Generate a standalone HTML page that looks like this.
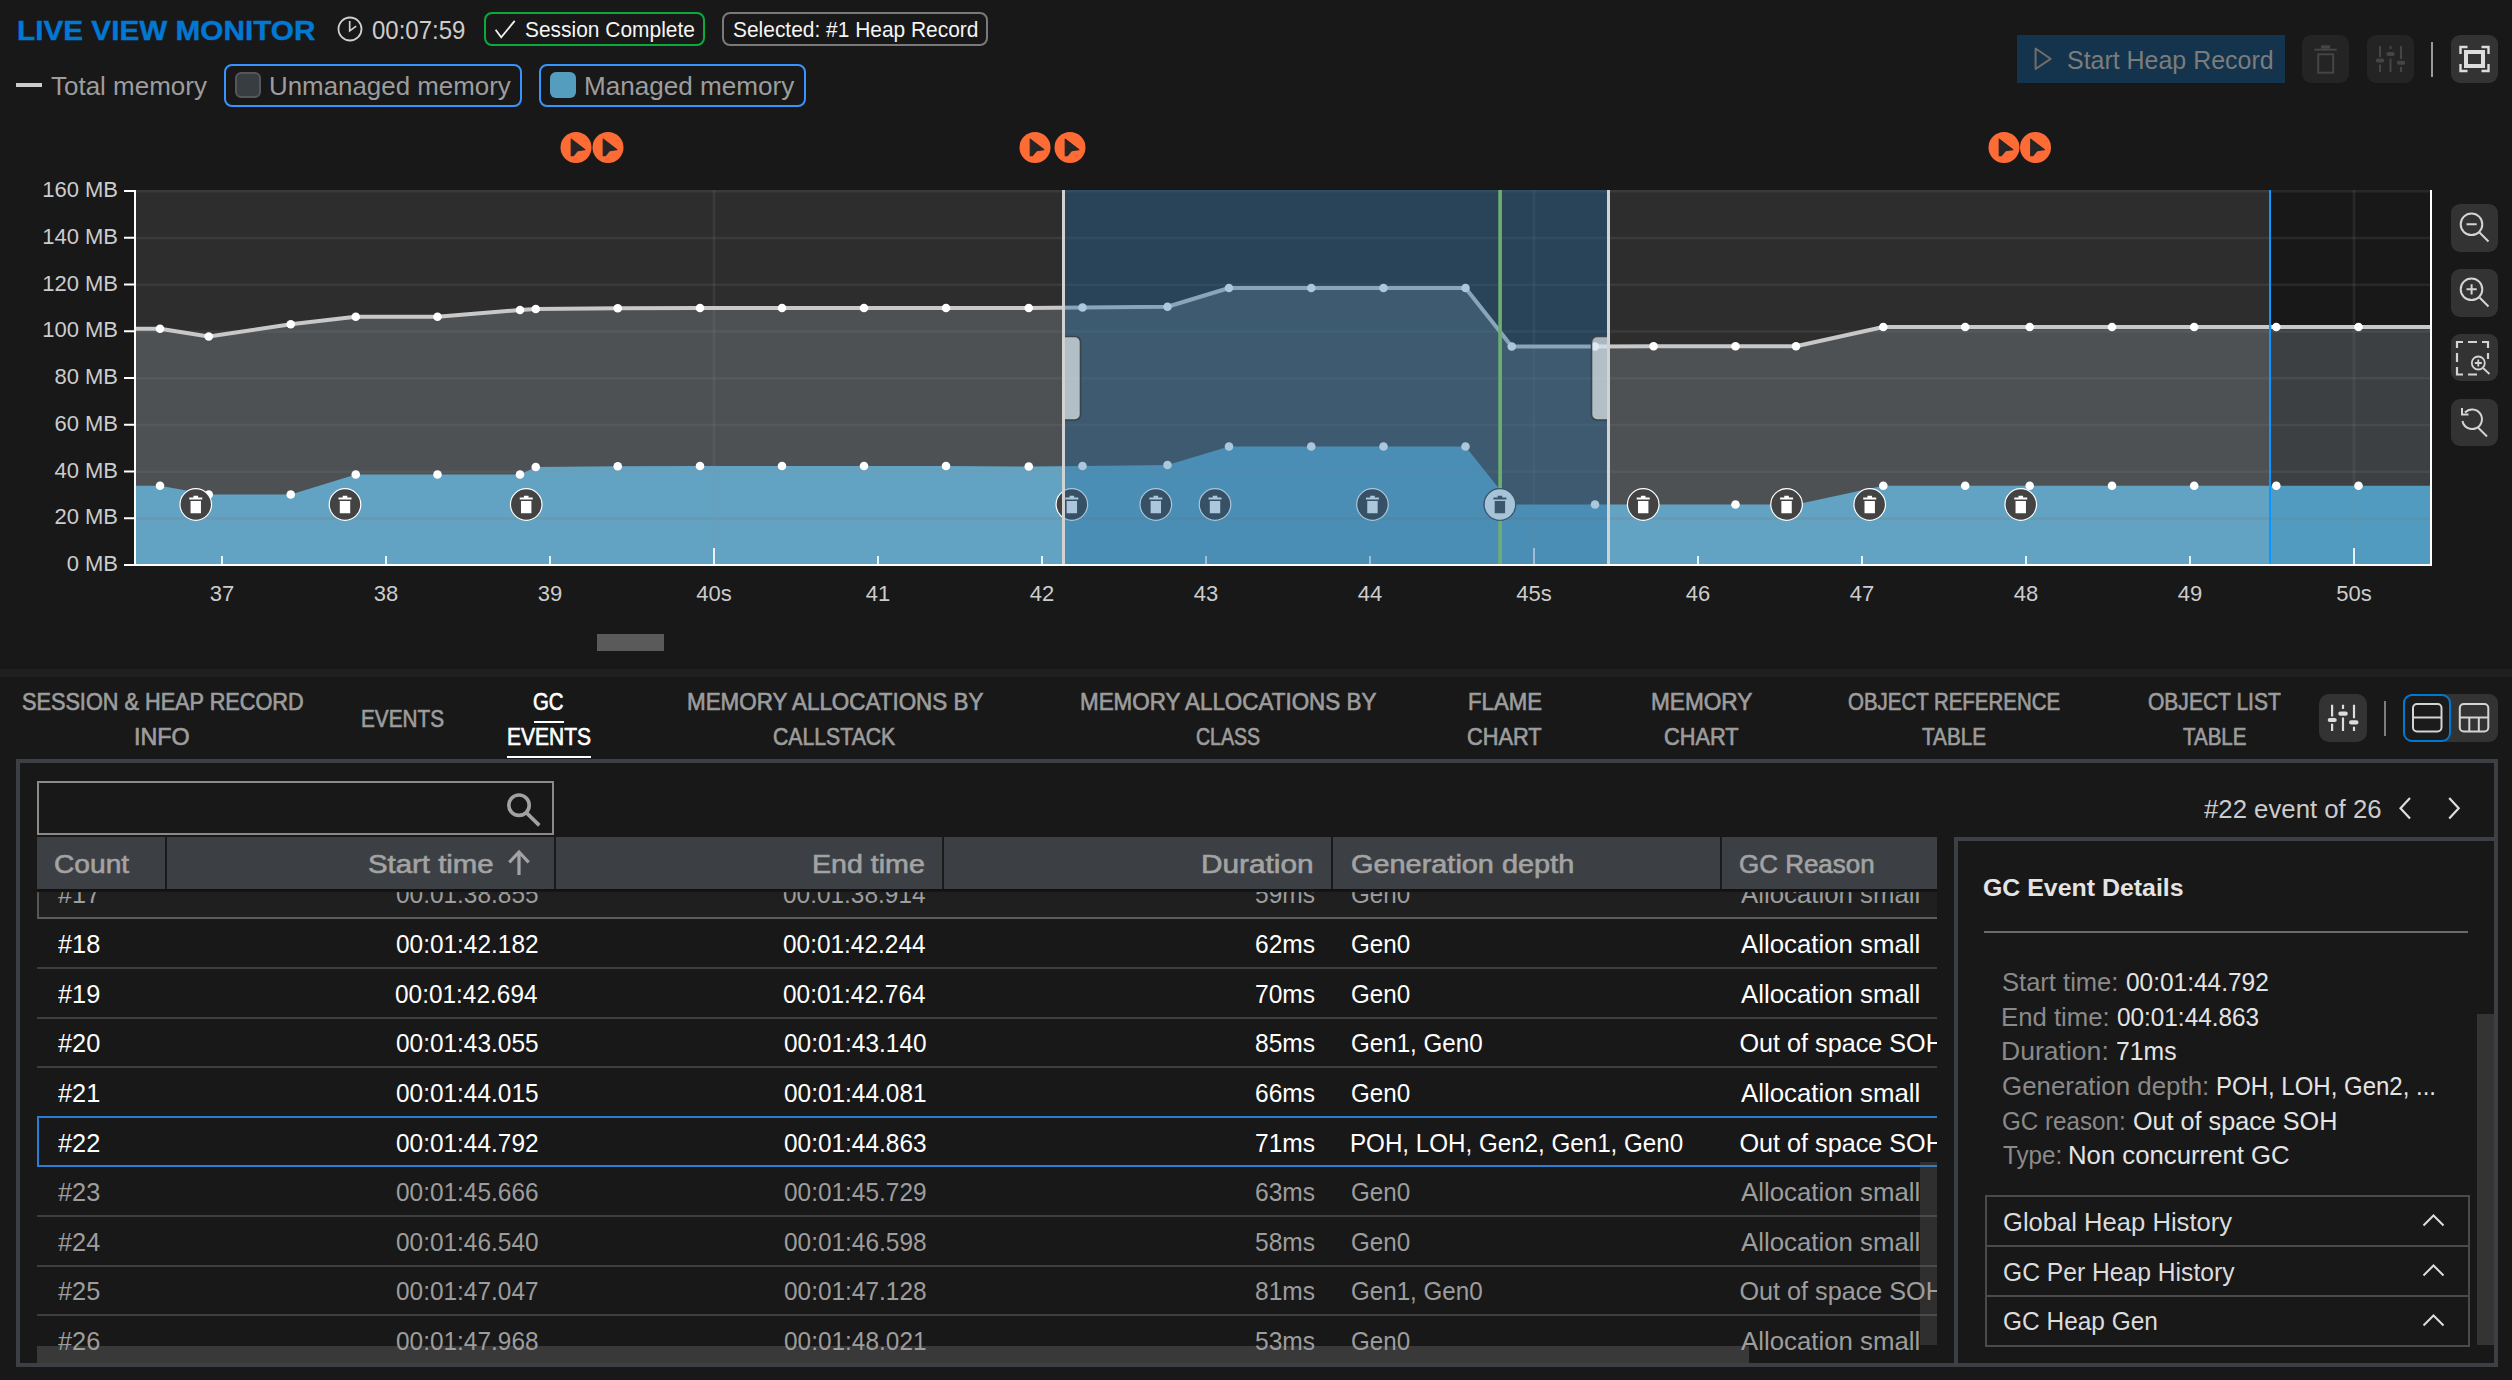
<!DOCTYPE html>
<html lang="en"><head><meta charset="utf-8"><title>Live View Monitor</title>
<style>
html,body{margin:0;padding:0;background:#181818;}
body{width:2512px;height:1380px;position:relative;overflow:hidden;font-family:"Liberation Sans",sans-serif;}
div,span,svg{position:absolute;box-sizing:border-box;}
.t{white-space:pre;line-height:1;transform-origin:0 0;}
.clip{overflow:hidden;}
</style></head><body>
<div id="header" style="left:0;top:0;width:2512px;height:120px">
<svg style="left:336px;top:15px" width="28" height="28" viewBox="0 0 28 28"><circle cx="14" cy="14" r="11.500" fill="none" stroke="#d0d0d0" stroke-width="1.800"/><path d="M13.700 6V15.900L20.200 11.100" fill="none" stroke="#d0d0d0" stroke-width="1.700"/></svg>
<div style="left:484px;top:12px;width:221px;height:34px;border:2px solid #0aab3c;border-radius:8px"></div>
<svg style="left:493px;top:18px" width="24" height="22" viewBox="0 0 24 22"><path d="M2.600 11.700L8.200 19.200L21.700 2.900" fill="none" stroke="#f0f0f0" stroke-width="1.8"/></svg>
<div style="left:722px;top:12px;width:266px;height:34px;border:2px solid #7a7a7a;border-radius:8px"></div>
<div style="left:16px;top:82.6px;width:26px;height:4.2px;background:#ccc"></div>
<div style="left:224.25px;top:64px;width:297.75px;height:42.9px;border:2px solid #3794ff;border-radius:8px"></div>
<div style="left:235px;top:72px;width:26.25px;height:26px;background:#373d41;border:2px solid #565656;border-radius:6px"></div>
<div style="left:539.25px;top:64px;width:267px;height:42.9px;border:2px solid #3794ff;border-radius:8px"></div>
<div style="left:550px;top:72px;width:26.25px;height:26px;background:#559dbe;border-radius:6px"></div>
<div style="left:2017px;top:35px;width:268px;height:48px;background:#13344c"></div>
<svg style="left:2030px;top:44px" width="26" height="30" viewBox="0 0 26 30"><path d="M5.6 4.5V25L20.6 14.8Z" fill="none" stroke="#736d68" stroke-width="2" stroke-linejoin="round"/></svg>
<div style="left:2302px;top:35px;width:47px;height:48px;background:#242424;border-radius:9px"></div>
<svg style="left:2302px;top:35px" width="47" height="48" viewBox="0 0 47 48"><g fill="none" stroke="#454545" stroke-width="2"><path d="M12.300 14.700H34.700"/><rect x="19" y="10.300" width="9" height="3.400" fill="#454545" stroke="none"/><rect x="16.200" y="19.300" width="15" height="18.400"/></g></svg>
<div style="left:2367px;top:35px;width:47px;height:48px;background:#242424;border-radius:9px"></div>
<svg style="left:2367px;top:35px" width="47" height="48" viewBox="0 0 47 48"><g fill="none" stroke="#454545" stroke-width="2"><path d="M13 11V22M13 29.500V37M23.500 11V14M23.500 23.500V37M34 11V24M34 32V37"/><path d="M10.800 25.500H15.200M21.300 19H25.700M31.800 27.800H36.200" stroke-width="4" stroke-linecap="round"/></g></svg>
<div style="left:2431px;top:42px;width:2px;height:35px;background:#9a9a9a"></div>
<div style="left:2451px;top:35px;width:47px;height:48px;background:#333;border-radius:9px"></div>
<svg style="left:2451px;top:35px" width="47" height="48" viewBox="0 0 47 48"><g fill="none" stroke="#ddd" stroke-width="2.4"><rect x="15" y="17" width="17" height="14" stroke-width="4"/><path d="M9.5 19V12H16.5M30.500 12H37.5V19M37.5 29V36H30.500M16.5 36H9.5V29"/></g></svg>
<span class="t" style="left:16.67px;top:17.00px;font-size:27.9px;color:#0078d4;transform:scaleX(1.0657);font-weight:700;-webkit-text-stroke:0.4px #0078d4;">LIVE VIEW MONITOR</span>
<span class="t" style="left:372.03px;top:18.00px;font-size:25.3px;color:#ccc;transform:scaleX(0.9490);">00:07:59</span>
<span class="t" style="left:525.03px;top:19.00px;font-size:22.3px;color:#f5f5f5;transform:scaleX(0.9389);">Session Complete</span>
<span class="t" style="left:732.53px;top:19.00px;font-size:22.3px;color:#f5f5f5;transform:scaleX(0.9385);">Selected: #1 Heap Record</span>
<span class="t" style="left:50.52px;top:74.00px;font-size:25.2px;color:#9d9d9d;transform:scaleX(1.0316);">Total memory</span>
<span class="t" style="left:268.96px;top:74.00px;font-size:25.2px;color:#9d9d9d;transform:scaleX(1.0278);">Unmanaged memory</span>
<span class="t" style="left:584.20px;top:74.00px;font-size:25.2px;color:#9d9d9d;transform:scaleX(1.0359);">Managed memory</span>
<span class="t" style="left:2067.20px;top:48.00px;font-size:25.2px;color:#7c7c7c;transform:scaleX(0.9903);">Start Heap Record</span>
</div>
<div id="chart" style="left:0;top:120px;width:2512px;height:549px">
<svg style="left:0;top:0" width="2512" height="549" viewBox="0 120 2512 549" font-family="'Liberation Sans',sans-serif"><defs><clipPath id="cl"><rect x="136" y="190" width="2134" height="375"/></clipPath><clipPath id="cr"><rect x="2270" y="190" width="161" height="375"/></clipPath></defs><g clip-path="url(#cl)"><rect x="136" y="190" width="2295" height="375" fill="#2d2d2d"/><polygon points="136,328.75 160,328.75 208.75,336.5 290.75,324.25 355.75,316.75 437.5,316.75 520,310 535.75,309 617.75,308.25 700,308 782,308 864,308 946,308 1028.75,308 1082.5,307.5 1167.5,306.75 1229,288 1311.25,288 1383.5,288 1465.5,288 1511.75,346.5 1595,346.5 1653.6,346.2 1735.5,346.2 1796,346.2 1883.3,327 1965.2,327 2029.7,327 2112,327 2194.2,327 2276.3,327 2358.5,327 2431,327 2431,564.5 136,564.5" fill="#4d5154"/><polygon points="136,485.75 160,485.75 208.75,494.5 290.75,494.5 355.75,474.5 437.5,474.5 520,474.5 535.75,467 617.75,466.25 700,466 782,466 864,466 946,466 1028.75,466.5 1082.5,466 1167.5,465 1229,446.5 1311.25,446.5 1383.5,446.5 1465.5,446.5 1511.75,504.5 1595,504.5 1653.6,504.5 1735.5,504.5 1796,504.5 1883.3,485.75 1965.2,485.75 2029.7,485.75 2112,485.75 2194.2,485.75 2276.3,485.75 2358.5,485.75 2431,485.75 2431,564.5 136,564.5" fill="#62a3c3"/></g><g clip-path="url(#cr)"><rect x="136" y="190" width="2295" height="375" fill="#181818"/><polygon points="136,328.75 160,328.75 208.75,336.5 290.75,324.25 355.75,316.75 437.5,316.75 520,310 535.75,309 617.75,308.25 700,308 782,308 864,308 946,308 1028.75,308 1082.5,307.5 1167.5,306.75 1229,288 1311.25,288 1383.5,288 1465.5,288 1511.75,346.5 1595,346.5 1653.6,346.2 1735.5,346.2 1796,346.2 1883.3,327 1965.2,327 2029.7,327 2112,327 2194.2,327 2276.3,327 2358.5,327 2431,327 2431,564.5 136,564.5" fill="#3d4042"/><polygon points="136,485.75 160,485.75 208.75,494.5 290.75,494.5 355.75,474.5 437.5,474.5 520,474.5 535.75,467 617.75,466.25 700,466 782,466 864,466 946,466 1028.75,466.5 1082.5,466 1167.5,465 1229,446.5 1311.25,446.5 1383.5,446.5 1465.5,446.5 1511.75,504.5 1595,504.5 1653.6,504.5 1735.5,504.5 1796,504.5 1883.3,485.75 1965.2,485.75 2029.7,485.75 2112,485.75 2194.2,485.75 2276.3,485.75 2358.5,485.75 2431,485.75 2431,564.5 136,564.5" fill="#509bbf"/></g><g fill="rgba(140,140,140,0.14)"><rect x="136" y="517.25" width="2294" height="2.5" fill="rgba(128,128,128,0.3)"/><rect x="136" y="470.5" width="2294" height="2.5"/><rect x="136" y="423.75" width="2294" height="2.5"/><rect x="136" y="377" width="2294" height="2.5"/><rect x="136" y="330.25" width="2294" height="2.5"/><rect x="136" y="283.5" width="2294" height="2.5"/><rect x="136" y="236.75" width="2294" height="2.5"/><rect x="136" y="190" width="2294" height="2.5"/><rect x="712.7" y="190" width="2.600" height="374"/><rect x="1532.7" y="190" width="2.600" height="374"/><rect x="2352.7" y="190" width="2.600" height="374"/></g><g fill="rgba(255,255,255,0.85)"><rect x="221" y="556" width="2" height="8.5"/><rect x="385" y="556" width="2" height="8.5"/><rect x="549" y="556" width="2" height="8.5"/><rect x="713" y="548" width="2" height="16.5"/><rect x="877" y="556" width="2" height="8.5"/><rect x="1041" y="556" width="2" height="8.5"/><rect x="1205" y="556" width="2" height="8.5"/><rect x="1369" y="556" width="2" height="8.5"/><rect x="1533" y="548" width="2" height="16.5"/><rect x="1697" y="556" width="2" height="8.5"/><rect x="1861" y="556" width="2" height="8.5"/><rect x="2025" y="556" width="2" height="8.5"/><rect x="2189" y="556" width="2" height="8.5"/><rect x="2353" y="548" width="2" height="16.5"/></g><polyline points="136,328.75 160,328.75 208.75,336.5 290.75,324.25 355.75,316.75 437.5,316.75 520,310 535.75,309 617.75,308.25 700,308 782,308 864,308 946,308 1028.75,308 1082.5,307.5 1167.5,306.75 1229,288 1311.25,288 1383.5,288 1465.5,288 1511.75,346.5 1595,346.5 1653.6,346.2 1735.5,346.2 1796,346.2 1883.3,327 1965.2,327 2029.7,327 2112,327 2194.2,327 2276.3,327 2358.5,327 2431,327" fill="none" stroke="#c8c8c8" stroke-width="4" stroke-linejoin="round"/><g fill="#fff"><circle cx="160" cy="328.75" r="4.3"/><circle cx="208.75" cy="336.5" r="4.3"/><circle cx="290.75" cy="324.25" r="4.3"/><circle cx="355.75" cy="316.75" r="4.3"/><circle cx="437.5" cy="316.75" r="4.3"/><circle cx="520" cy="310" r="4.3"/><circle cx="535.75" cy="309" r="4.3"/><circle cx="617.75" cy="308.25" r="4.3"/><circle cx="700" cy="308" r="4.3"/><circle cx="782" cy="308" r="4.3"/><circle cx="864" cy="308" r="4.3"/><circle cx="946" cy="308" r="4.3"/><circle cx="1028.75" cy="308" r="4.3"/><circle cx="1082.5" cy="307.5" r="4.3"/><circle cx="1167.5" cy="306.75" r="4.3"/><circle cx="1229" cy="288" r="4.3"/><circle cx="1311.25" cy="288" r="4.3"/><circle cx="1383.5" cy="288" r="4.3"/><circle cx="1465.5" cy="288" r="4.3"/><circle cx="1511.75" cy="346.5" r="4.3"/><circle cx="1595" cy="346.5" r="4.3"/><circle cx="1653.6" cy="346.2" r="4.3"/><circle cx="1735.5" cy="346.2" r="4.3"/><circle cx="1796" cy="346.2" r="4.3"/><circle cx="1883.3" cy="327" r="4.3"/><circle cx="1965.2" cy="327" r="4.3"/><circle cx="2029.7" cy="327" r="4.3"/><circle cx="2112" cy="327" r="4.3"/><circle cx="2194.2" cy="327" r="4.3"/><circle cx="2276.3" cy="327" r="4.3"/><circle cx="2358.5" cy="327" r="4.3"/><circle cx="160" cy="485.75" r="4.3"/><circle cx="208.75" cy="494.5" r="4.3"/><circle cx="290.75" cy="494.5" r="4.3"/><circle cx="355.75" cy="474.5" r="4.3"/><circle cx="437.5" cy="474.5" r="4.3"/><circle cx="520" cy="474.5" r="4.3"/><circle cx="535.75" cy="467" r="4.3"/><circle cx="617.75" cy="466.25" r="4.3"/><circle cx="700" cy="466" r="4.3"/><circle cx="782" cy="466" r="4.3"/><circle cx="864" cy="466" r="4.3"/><circle cx="946" cy="466" r="4.3"/><circle cx="1028.75" cy="466.5" r="4.3"/><circle cx="1082.5" cy="466" r="4.3"/><circle cx="1167.5" cy="465" r="4.3"/><circle cx="1229" cy="446.5" r="4.3"/><circle cx="1311.25" cy="446.5" r="4.3"/><circle cx="1383.5" cy="446.5" r="4.3"/><circle cx="1465.5" cy="446.5" r="4.3"/><circle cx="1511.75" cy="504.5" r="4.3"/><circle cx="1595" cy="504.5" r="4.3"/><circle cx="1653.6" cy="504.5" r="4.3"/><circle cx="1735.5" cy="504.5" r="4.3"/><circle cx="1796" cy="504.5" r="4.3"/><circle cx="1883.3" cy="485.75" r="4.3"/><circle cx="1965.2" cy="485.75" r="4.3"/><circle cx="2029.7" cy="485.75" r="4.3"/><circle cx="2112" cy="485.75" r="4.3"/><circle cx="2194.2" cy="485.75" r="4.3"/><circle cx="2276.3" cy="485.75" r="4.3"/><circle cx="2358.5" cy="485.75" r="4.3"/></g><g transform="translate(195.76,504.5)"><circle r="15.8" fill="#434343" stroke="#fff" stroke-width="1.2"/><path d="M-6.5 -6.9H6.5V-4.9H-6.5ZM-2.3 -8.8H2.3V-6.9H-2.3ZM-5.2 -3.5H5.2V8.7H-5.2Z" fill="#fff"/></g><g transform="translate(345,504.5)"><circle r="15.8" fill="#434343" stroke="#fff" stroke-width="1.2"/><path d="M-6.5 -6.9H6.5V-4.9H-6.5ZM-2.3 -8.8H2.3V-6.9H-2.3ZM-5.2 -3.5H5.2V8.7H-5.2Z" fill="#fff"/></g><g transform="translate(526.22,504.5)"><circle r="15.8" fill="#434343" stroke="#fff" stroke-width="1.2"/><path d="M-6.5 -6.9H6.5V-4.9H-6.5ZM-2.3 -8.8H2.3V-6.9H-2.3ZM-5.2 -3.5H5.2V8.7H-5.2Z" fill="#fff"/></g><g transform="translate(1071.85,504.5)"><circle r="15.8" fill="#434343" stroke="#fff" stroke-width="1.2"/><path d="M-6.5 -6.9H6.5V-4.9H-6.5ZM-2.3 -8.8H2.3V-6.9H-2.3ZM-5.2 -3.5H5.2V8.7H-5.2Z" fill="#fff"/></g><g transform="translate(1155.82,504.5)"><circle r="15.8" fill="#434343" stroke="#fff" stroke-width="1.2"/><path d="M-6.5 -6.9H6.5V-4.9H-6.5ZM-2.3 -8.8H2.3V-6.9H-2.3ZM-5.2 -3.5H5.2V8.7H-5.2Z" fill="#fff"/></g><g transform="translate(1215.02,504.5)"><circle r="15.8" fill="#434343" stroke="#fff" stroke-width="1.2"/><path d="M-6.5 -6.9H6.5V-4.9H-6.5ZM-2.3 -8.8H2.3V-6.9H-2.3ZM-5.2 -3.5H5.2V8.7H-5.2Z" fill="#fff"/></g><g transform="translate(1372.46,504.5)"><circle r="15.8" fill="#434343" stroke="#fff" stroke-width="1.2"/><path d="M-6.5 -6.9H6.5V-4.9H-6.5ZM-2.3 -8.8H2.3V-6.9H-2.3ZM-5.2 -3.5H5.2V8.7H-5.2Z" fill="#fff"/></g><g transform="translate(1499.89,504.5)"><circle r="15.8" fill="#f6f8fa" stroke="#434343" stroke-width="1.2"/><path d="M-6.5 -6.9H6.5V-4.9H-6.5ZM-2.3 -8.8H2.3V-6.9H-2.3ZM-5.2 -3.5H5.2V8.7H-5.2Z" fill="#434343"/></g><g transform="translate(1643.22,504.5)"><circle r="15.8" fill="#434343" stroke="#fff" stroke-width="1.2"/><path d="M-6.5 -6.9H6.5V-4.9H-6.5ZM-2.3 -8.8H2.3V-6.9H-2.3ZM-5.2 -3.5H5.2V8.7H-5.2Z" fill="#fff"/></g><g transform="translate(1786.56,504.5)"><circle r="15.8" fill="#434343" stroke="#fff" stroke-width="1.2"/><path d="M-6.5 -6.9H6.5V-4.9H-6.5ZM-2.3 -8.8H2.3V-6.9H-2.3ZM-5.2 -3.5H5.2V8.7H-5.2Z" fill="#fff"/></g><g transform="translate(1869.71,504.5)"><circle r="15.8" fill="#434343" stroke="#fff" stroke-width="1.2"/><path d="M-6.5 -6.9H6.5V-4.9H-6.5ZM-2.3 -8.8H2.3V-6.9H-2.3ZM-5.2 -3.5H5.2V8.7H-5.2Z" fill="#fff"/></g><g transform="translate(2020.75,504.5)"><circle r="15.8" fill="#434343" stroke="#fff" stroke-width="1.2"/><path d="M-6.5 -6.9H6.5V-4.9H-6.5ZM-2.3 -8.8H2.3V-6.9H-2.3ZM-5.2 -3.5H5.2V8.7H-5.2Z" fill="#fff"/></g><rect x="1065" y="190" width="542" height="375" fill="rgba(34,106,160,0.375)"/><rect x="1498.3" y="190" width="3.6" height="375" fill="#6db06d"/><g transform="translate(1499.89,504.5)"><circle r="15.8" fill="#a7c3d8" stroke="#3a556c" stroke-width="1.2"/><path d="M-6.5 -6.9H6.5V-4.9H-6.5ZM-2.3 -8.8H2.3V-6.9H-2.3ZM-5.2 -3.5H5.2V8.7H-5.2Z" fill="#3a556c"/></g><path d="M1064 336.500H1075a5.500 5.500 0 0 1 5.500 5.500V414.500a5.500 5.500 0 0 1 -5.500 5.500H1064" fill="rgba(255,255,255,0.61)" stroke="#3a4349" stroke-width="1.600"/><path d="M1608 336.500H1597a5.500 5.500 0 0 0 -5.500 5.500V414.500a5.500 5.500 0 0 0 5.500 5.500H1608" fill="rgba(255,255,255,0.61)" stroke="#3a4349" stroke-width="1.600"/><rect x="1062" y="190" width="3" height="375" fill="#d2d2d2"/><rect x="1607" y="190" width="3" height="375" fill="#d2d2d2"/><rect x="2269" y="190" width="2" height="375" fill="#0a97ff"/><g fill="#fff"><rect x="134" y="190" width="2" height="376"/><rect x="124" y="564" width="2308" height="2"/><rect x="2430" y="190" width="2" height="376"/><rect x="124" y="517.25" width="10" height="2"/><rect x="124" y="470.5" width="10" height="2"/><rect x="124" y="423.75" width="10" height="2"/><rect x="124" y="377" width="10" height="2"/><rect x="124" y="330.25" width="10" height="2"/><rect x="124" y="283.5" width="10" height="2"/><rect x="124" y="236.75" width="10" height="2"/><rect x="124" y="190" width="10" height="2"/></g><g fill="#ccc" font-size="22"><text x="118" y="571" text-anchor="end">0 MB</text><text x="118" y="524.25" text-anchor="end">20 MB</text><text x="118" y="477.5" text-anchor="end">40 MB</text><text x="118" y="430.75" text-anchor="end">60 MB</text><text x="118" y="384" text-anchor="end">80 MB</text><text x="118" y="337.25" text-anchor="end">100 MB</text><text x="118" y="290.5" text-anchor="end">120 MB</text><text x="118" y="243.75" text-anchor="end">140 MB</text><text x="118" y="197" text-anchor="end">160 MB</text><text x="222" y="601" text-anchor="middle">37</text><text x="386" y="601" text-anchor="middle">38</text><text x="550" y="601" text-anchor="middle">39</text><text x="714" y="601" text-anchor="middle">40s</text><text x="878" y="601" text-anchor="middle">41</text><text x="1042" y="601" text-anchor="middle">42</text><text x="1206" y="601" text-anchor="middle">43</text><text x="1370" y="601" text-anchor="middle">44</text><text x="1534" y="601" text-anchor="middle">45s</text><text x="1698" y="601" text-anchor="middle">46</text><text x="1862" y="601" text-anchor="middle">47</text><text x="2026" y="601" text-anchor="middle">48</text><text x="2190" y="601" text-anchor="middle">49</text><text x="2354" y="601" text-anchor="middle">50s</text></g><g transform="translate(576,147.500)"><circle r="15.500" fill="#ff6b35"/><path d="M-4.800 -8.400L8.900 2.100L1.600 3.100L-2.600 8.200H-4.800Z" fill="#252526" stroke="#252526" stroke-width="1.100" stroke-linejoin="round"/></g><g transform="translate(608,147.500)"><circle r="15.500" fill="#ff6b35"/><path d="M-4.800 -8.400L8.900 2.100L1.600 3.100L-2.600 8.200H-4.800Z" fill="#252526" stroke="#252526" stroke-width="1.100" stroke-linejoin="round"/></g><g transform="translate(1035,147.500)"><circle r="15.500" fill="#ff6b35"/><path d="M-4.800 -8.400L8.900 2.100L1.600 3.100L-2.600 8.200H-4.800Z" fill="#252526" stroke="#252526" stroke-width="1.100" stroke-linejoin="round"/></g><g transform="translate(1070,147.500)"><circle r="15.500" fill="#ff6b35"/><path d="M-4.800 -8.400L8.900 2.100L1.600 3.100L-2.600 8.200H-4.800Z" fill="#252526" stroke="#252526" stroke-width="1.100" stroke-linejoin="round"/></g><g transform="translate(2004,147.500)"><circle r="15.500" fill="#ff6b35"/><path d="M-4.800 -8.400L8.900 2.100L1.600 3.100L-2.600 8.200H-4.800Z" fill="#252526" stroke="#252526" stroke-width="1.100" stroke-linejoin="round"/></g><g transform="translate(2035.5,147.500)"><circle r="15.500" fill="#ff6b35"/><path d="M-4.800 -8.400L8.900 2.100L1.600 3.100L-2.600 8.200H-4.800Z" fill="#252526" stroke="#252526" stroke-width="1.100" stroke-linejoin="round"/></g><rect x="597" y="634" width="67" height="17" fill="#5a5a5a"/></svg>
<svg style="left:2451px;top:84px;background:#333;border-radius:9px" width="47" height="47.500" viewBox="0 0 47 47.500"><g fill="none" stroke="#d4d4d4" stroke-width="2"><circle cx="20.500" cy="20.300" r="10.800"/><path d="M28.500 28.500L37.500 37.500M15.500 20.300H25.700"/></g></svg>
<svg style="left:2451px;top:149px;background:#333;border-radius:9px" width="47" height="47.500" viewBox="0 0 47 47.500"><g fill="none" stroke="#d4d4d4" stroke-width="2"><circle cx="20.500" cy="20.300" r="10.800"/><path d="M28.500 28.500L37.500 37.500M15.500 20.300H25.700M20.600 15.200V25.400"/></g></svg>
<svg style="left:2451px;top:213.5px;background:#333;border-radius:9px" width="47" height="47.500" viewBox="0 0 47 47.500"><g fill="none" stroke="#d4d4d4" stroke-width="2"><path d="M6 14V8H12M17 8H26M31 8H37V14M37 19V25M6 19V28M6 33V40.500H12M17 40.500H26" stroke-width="2.200"/><circle cx="27.300" cy="29" r="6.500" stroke-width="1.800"/><path d="M32 34L38.500 40M23.800 29H30.800M27.300 25.500V32.500" stroke-width="1.800"/></g></svg>
<svg style="left:2451px;top:278.5px;background:#333;border-radius:9px" width="47" height="47.500" viewBox="0 0 47 47.500"><g fill="none" stroke="#d4d4d4" stroke-width="2"><path d="M11.500 22A9.800 9.800 0 1 0 14 13.500M11 9V15.500H17.500"/><path d="M27 28.500L36 37.500"/></g></svg>
</div>
<div id="splitter" style="left:0;top:669px;width:2512px;height:8px;background:#1f1f1f"></div>
<div id="tabs" style="left:0;top:677px;width:2512px;height:82px">
<div style="left:533.5px;top:43.5px;width:30.5px;height:2px;background:#fff"></div>
<div style="left:507px;top:78.5px;width:84px;height:2.5px;background:#fff"></div>
<svg style="left:2319px;top:17px;background:#333;border-radius:10px" width="48" height="47.500" viewBox="0 0 48 47.500"><g fill="none" stroke="#dcdcdc" stroke-width="2.200"><path d="M13.100 10.800V22.500M13.100 29.700V37M24 10.800V15M24 23.400V37M35 10.800V24.300M35 32.700V37"/><path d="M10.800 26H15.700M21.400 19.700H26.700M32.100 28.400H37.400" stroke-width="4.200" stroke-linecap="round"/></g></svg>
<div style="left:2384px;top:24px;width:2px;height:35px;background:#7d7d7d"></div>
<div style="left:2402.5px;top:17px;width:95px;height:47.5px;background:#333;border-radius:9px"></div>
<div style="left:2402.5px;top:17px;width:48.5px;height:47.5px;border:2px solid #0078d4;border-radius:9px;background:#1b1b1b"></div>
<svg style="left:2402.500px;top:17px" width="95" height="47.500" viewBox="0 0 95 47.500"><g fill="none" stroke="#d4d4d4" stroke-width="2"><rect x="10" y="10" width="28.500" height="27.500" rx="4"/><path d="M10 23.500H38.500"/><rect x="56.800" y="10" width="28.500" height="27.500" rx="4"/><path d="M56.800 23.500H85.300M66.300 23.500V37.500M75.800 23.500V37.500"/></g></svg>
<span class="t" style="left:21.54px;top:14.00px;font-size:23.4px;color:#9d9d9d;transform:scaleX(0.9274);-webkit-text-stroke:0.65px #9d9d9d;">SESSION &amp; HEAP RECORD</span>
<span class="t" style="left:134.21px;top:49.00px;font-size:23.4px;color:#9d9d9d;transform:scaleX(0.9963);-webkit-text-stroke:0.65px #9d9d9d;">INFO</span>
<span class="t" style="left:361.06px;top:31.00px;font-size:23.4px;color:#9d9d9d;transform:scaleX(0.8871);-webkit-text-stroke:0.65px #9d9d9d;">EVENTS</span>
<span class="t" style="left:533.06px;top:14.00px;font-size:23.4px;color:#fff;transform:scaleX(0.8714);-webkit-text-stroke:0.65px #fff;">GC</span>
<span class="t" style="left:506.55px;top:49.00px;font-size:23.4px;color:#fff;transform:scaleX(0.8978);-webkit-text-stroke:0.65px #fff;">EVENTS</span>
<span class="t" style="left:686.52px;top:14.00px;font-size:23.4px;color:#9d9d9d;transform:scaleX(0.9579);-webkit-text-stroke:0.65px #9d9d9d;">MEMORY ALLOCATIONS BY</span>
<span class="t" style="left:773.05px;top:49.00px;font-size:23.4px;color:#9d9d9d;transform:scaleX(0.9074);-webkit-text-stroke:0.65px #9d9d9d;">CALLSTACK</span>
<span class="t" style="left:1079.52px;top:14.00px;font-size:23.4px;color:#9d9d9d;transform:scaleX(0.9579);-webkit-text-stroke:0.65px #9d9d9d;">MEMORY ALLOCATIONS BY</span>
<span class="t" style="left:1195.58px;top:49.00px;font-size:23.4px;color:#9d9d9d;transform:scaleX(0.8355);-webkit-text-stroke:0.65px #9d9d9d;">CLASS</span>
<span class="t" style="left:1467.53px;top:14.00px;font-size:23.4px;color:#9d9d9d;transform:scaleX(0.9487);-webkit-text-stroke:0.65px #9d9d9d;">FLAME</span>
<span class="t" style="left:1467.03px;top:49.00px;font-size:23.4px;color:#9d9d9d;transform:scaleX(0.9313);-webkit-text-stroke:0.65px #9d9d9d;">CHART</span>
<span class="t" style="left:1651.02px;top:14.00px;font-size:23.4px;color:#9d9d9d;transform:scaleX(0.9667);-webkit-text-stroke:0.65px #9d9d9d;">MEMORY</span>
<span class="t" style="left:1664.03px;top:49.00px;font-size:23.4px;color:#9d9d9d;transform:scaleX(0.9313);-webkit-text-stroke:0.65px #9d9d9d;">CHART</span>
<span class="t" style="left:1847.56px;top:14.00px;font-size:23.4px;color:#9d9d9d;transform:scaleX(0.8740);-webkit-text-stroke:0.65px #9d9d9d;">OBJECT REFERENCE</span>
<span class="t" style="left:1921.94px;top:49.00px;font-size:23.4px;color:#9d9d9d;transform:scaleX(0.8836);-webkit-text-stroke:0.65px #9d9d9d;">TABLE</span>
<span class="t" style="left:2147.55px;top:14.00px;font-size:23.4px;color:#9d9d9d;transform:scaleX(0.8986);-webkit-text-stroke:0.65px #9d9d9d;">OBJECT LIST</span>
<span class="t" style="left:2182.94px;top:49.00px;font-size:23.4px;color:#9d9d9d;transform:scaleX(0.8767);-webkit-text-stroke:0.65px #9d9d9d;">TABLE</span>
</div>
<div id="panel" style="left:16px;top:759px;width:2482px;height:608px;border:4px solid #3c4045">
<div style="left:17px;top:18px;width:517.25px;height:54px;border:2px solid #8a8a8a"></div>
<svg style="left:480px;top:27px" width="48" height="44" viewBox="500 790 48 44"><g fill="none" stroke="#a2a2a2" stroke-width="3.600"><circle cx="519" cy="805.200" r="10.200"/><path d="M526.300 812.600L539.300 825.400"/></g></svg>
<svg style="left:2370px;top:27px" width="80" height="36" viewBox="2390 790 80 36"><g fill="none" stroke="#ddd" stroke-width="2.200"><path d="M2410 798L2400.500 808.200L2410 818.400M2449.200 798L2458.700 808.200L2449.200 818.400"/></g></svg>
<div id="table" class="clip" style="left:17px;top:74px;width:1900px;height:526px"><div id="rows" class="clip" style="left:0;top:55px;width:1900px;height:471px"><div style="left:0px;top:-22.3px;width:1900px;height:49.6px;background:#1f1f1f;border-left:2px solid #565656;border-bottom:2px solid #5c5c5c"></div>
<div style="left:0px;top:74.9px;width:1900px;height:2px;background:#3e3e3e"></div>
<div style="left:0px;top:124.5px;width:1900px;height:2px;background:#3e3e3e"></div>
<div style="left:0px;top:174.1px;width:1900px;height:2px;background:#3e3e3e"></div>
<div style="left:0px;top:223.7px;width:1902px;height:51.6px;border:2px solid #2b7cd3;border-right:none"></div>
<div style="left:0px;top:322.9px;width:1900px;height:2px;background:#3e3e3e"></div>
<div style="left:0px;top:372.5px;width:1900px;height:2px;background:#3e3e3e"></div>
<div style="left:0px;top:422.1px;width:1900px;height:2px;background:#3e3e3e"></div>
<div style="left:1883.3px;top:270.3px;width:16.7px;height:183.2px;background:rgba(110,110,110,0.27)"></div>
<div style="left:0px;top:454px;width:1711.5px;height:17px;background:#393939"></div>
<div style="left:1711.5px;top:454px;width:188.5px;height:17px;background:#181818"></div>
<span class="t" style="left:20.50px;top:-10.00px;font-size:25.2px;color:#9d9d9d;transform:scaleX(1.0060);">#17</span>
<span class="t" style="left:358.62px;top:-10.00px;font-size:25.2px;color:#9d9d9d;transform:scaleX(0.9692);">00:01:38.855</span>
<span class="t" style="left:746.30px;top:-10.00px;font-size:25.2px;color:#9d9d9d;transform:scaleX(0.9692);">00:01:38.914</span>
<span class="t" style="left:1218.01px;top:-10.00px;font-size:25.2px;color:#9d9d9d;transform:scaleX(0.9754);">59ms</span>
<span class="t" style="left:1313.77px;top:-10.00px;font-size:25.2px;color:#9d9d9d;transform:scaleX(0.9595);">Gen0</span>
<span class="t" style="left:1703.51px;top:-10.00px;font-size:25.2px;color:#9d9d9d;transform:scaleX(1.0243);">Allocation small</span>
<span class="t" style="left:20.50px;top:40.00px;font-size:25.2px;color:#fff;transform:scaleX(1.0060);">#18</span>
<span class="t" style="left:358.62px;top:40.00px;font-size:25.2px;color:#fff;transform:scaleX(0.9692);">00:01:42.182</span>
<span class="t" style="left:746.30px;top:40.00px;font-size:25.2px;color:#fff;transform:scaleX(0.9692);">00:01:42.244</span>
<span class="t" style="left:1218.01px;top:40.00px;font-size:25.2px;color:#fff;transform:scaleX(0.9754);">62ms</span>
<span class="t" style="left:1313.77px;top:40.00px;font-size:25.2px;color:#fff;transform:scaleX(0.9595);">Gen0</span>
<span class="t" style="left:1703.51px;top:40.00px;font-size:25.2px;color:#fff;transform:scaleX(1.0243);">Allocation small</span>
<span class="t" style="left:20.50px;top:90.00px;font-size:25.2px;color:#fff;transform:scaleX(1.0060);">#19</span>
<span class="t" style="left:357.65px;top:90.00px;font-size:25.2px;color:#fff;transform:scaleX(0.9692);">00:01:42.694</span>
<span class="t" style="left:746.30px;top:90.00px;font-size:25.2px;color:#fff;transform:scaleX(0.9692);">00:01:42.764</span>
<span class="t" style="left:1218.01px;top:90.00px;font-size:25.2px;color:#fff;transform:scaleX(0.9754);">70ms</span>
<span class="t" style="left:1313.77px;top:90.00px;font-size:25.2px;color:#fff;transform:scaleX(0.9595);">Gen0</span>
<span class="t" style="left:1703.51px;top:90.00px;font-size:25.2px;color:#fff;transform:scaleX(1.0243);">Allocation small</span>
<span class="t" style="left:20.50px;top:139.00px;font-size:25.2px;color:#fff;transform:scaleX(1.0060);">#20</span>
<span class="t" style="left:358.62px;top:139.00px;font-size:25.2px;color:#fff;transform:scaleX(0.9692);">00:01:43.055</span>
<span class="t" style="left:747.27px;top:139.00px;font-size:25.2px;color:#fff;transform:scaleX(0.9692);">00:01:43.140</span>
<span class="t" style="left:1218.01px;top:139.00px;font-size:25.2px;color:#fff;transform:scaleX(0.9754);">85ms</span>
<span class="t" style="left:1313.77px;top:139.00px;font-size:25.2px;color:#fff;transform:scaleX(0.9595);">Gen1, Gen0</span>
<span class="t" style="left:1702.50px;top:139.00px;font-size:25.2px;color:#fff;">Out of space SOH</span>
<span class="t" style="left:20.50px;top:189.00px;font-size:25.2px;color:#fff;transform:scaleX(1.0060);">#21</span>
<span class="t" style="left:358.62px;top:189.00px;font-size:25.2px;color:#fff;transform:scaleX(0.9692);">00:01:44.015</span>
<span class="t" style="left:747.27px;top:189.00px;font-size:25.2px;color:#fff;transform:scaleX(0.9692);">00:01:44.081</span>
<span class="t" style="left:1218.01px;top:189.00px;font-size:25.2px;color:#fff;transform:scaleX(0.9754);">66ms</span>
<span class="t" style="left:1313.77px;top:189.00px;font-size:25.2px;color:#fff;transform:scaleX(0.9595);">Gen0</span>
<span class="t" style="left:1703.51px;top:189.00px;font-size:25.2px;color:#fff;transform:scaleX(1.0243);">Allocation small</span>
<span class="t" style="left:20.50px;top:239.00px;font-size:25.2px;color:#fff;transform:scaleX(1.0060);">#22</span>
<span class="t" style="left:358.62px;top:239.00px;font-size:25.2px;color:#fff;transform:scaleX(0.9692);">00:01:44.792</span>
<span class="t" style="left:747.27px;top:239.00px;font-size:25.2px;color:#fff;transform:scaleX(0.9692);">00:01:44.863</span>
<span class="t" style="left:1218.01px;top:239.00px;font-size:25.2px;color:#fff;transform:scaleX(0.9754);">71ms</span>
<span class="t" style="left:1312.81px;top:239.00px;font-size:25.2px;color:#fff;transform:scaleX(0.9595);">POH, LOH, Gen2, Gen1, Gen0</span>
<span class="t" style="left:1702.50px;top:239.00px;font-size:25.2px;color:#fff;">Out of space SOH</span>
<span class="t" style="left:20.50px;top:288.00px;font-size:25.2px;color:#9d9d9d;transform:scaleX(1.0060);">#23</span>
<span class="t" style="left:358.62px;top:288.00px;font-size:25.2px;color:#9d9d9d;transform:scaleX(0.9692);">00:01:45.666</span>
<span class="t" style="left:747.27px;top:288.00px;font-size:25.2px;color:#9d9d9d;transform:scaleX(0.9692);">00:01:45.729</span>
<span class="t" style="left:1218.01px;top:288.00px;font-size:25.2px;color:#9d9d9d;transform:scaleX(0.9754);">63ms</span>
<span class="t" style="left:1313.77px;top:288.00px;font-size:25.2px;color:#9d9d9d;transform:scaleX(0.9595);">Gen0</span>
<span class="t" style="left:1703.51px;top:288.00px;font-size:25.2px;color:#9d9d9d;transform:scaleX(1.0243);">Allocation small</span>
<span class="t" style="left:20.50px;top:338.00px;font-size:25.2px;color:#9d9d9d;transform:scaleX(1.0060);">#24</span>
<span class="t" style="left:358.62px;top:338.00px;font-size:25.2px;color:#9d9d9d;transform:scaleX(0.9692);">00:01:46.540</span>
<span class="t" style="left:747.27px;top:338.00px;font-size:25.2px;color:#9d9d9d;transform:scaleX(0.9692);">00:01:46.598</span>
<span class="t" style="left:1218.01px;top:338.00px;font-size:25.2px;color:#9d9d9d;transform:scaleX(0.9754);">58ms</span>
<span class="t" style="left:1313.77px;top:338.00px;font-size:25.2px;color:#9d9d9d;transform:scaleX(0.9595);">Gen0</span>
<span class="t" style="left:1703.51px;top:338.00px;font-size:25.2px;color:#9d9d9d;transform:scaleX(1.0243);">Allocation small</span>
<span class="t" style="left:20.50px;top:387.00px;font-size:25.2px;color:#9d9d9d;transform:scaleX(1.0060);">#25</span>
<span class="t" style="left:358.62px;top:387.00px;font-size:25.2px;color:#9d9d9d;transform:scaleX(0.9692);">00:01:47.047</span>
<span class="t" style="left:747.27px;top:387.00px;font-size:25.2px;color:#9d9d9d;transform:scaleX(0.9692);">00:01:47.128</span>
<span class="t" style="left:1218.01px;top:387.00px;font-size:25.2px;color:#9d9d9d;transform:scaleX(0.9754);">81ms</span>
<span class="t" style="left:1313.77px;top:387.00px;font-size:25.2px;color:#9d9d9d;transform:scaleX(0.9595);">Gen1, Gen0</span>
<span class="t" style="left:1702.50px;top:387.00px;font-size:25.2px;color:#9d9d9d;">Out of space SOH</span>
<span class="t" style="left:20.50px;top:437.00px;font-size:25.2px;color:#9d9d9d;transform:scaleX(1.0060);">#26</span>
<span class="t" style="left:358.62px;top:437.00px;font-size:25.2px;color:#9d9d9d;transform:scaleX(0.9692);">00:01:47.968</span>
<span class="t" style="left:747.27px;top:437.00px;font-size:25.2px;color:#9d9d9d;transform:scaleX(0.9692);">00:01:48.021</span>
<span class="t" style="left:1218.01px;top:437.00px;font-size:25.2px;color:#9d9d9d;transform:scaleX(0.9754);">53ms</span>
<span class="t" style="left:1313.77px;top:437.00px;font-size:25.2px;color:#9d9d9d;transform:scaleX(0.9595);">Gen0</span>
<span class="t" style="left:1703.51px;top:437.00px;font-size:25.2px;color:#9d9d9d;transform:scaleX(1.0243);">Allocation small</span></div>
<div style="left:0px;top:0px;width:1900px;height:52px;background:#3c4045"></div>
<div style="left:128px;top:0px;width:2px;height:52px;background:#1b1b1b"></div>
<div style="left:517.3px;top:0px;width:2px;height:52px;background:#1b1b1b"></div>
<div style="left:905px;top:0px;width:2px;height:52px;background:#1b1b1b"></div>
<div style="left:1294px;top:0px;width:2px;height:52px;background:#1b1b1b"></div>
<div style="left:1683px;top:0px;width:2px;height:52px;background:#1b1b1b"></div>
<div style="left:0px;top:52px;width:1900px;height:4px;background:linear-gradient(#101010,rgba(16,16,16,0))"></div>
<svg style="left:467px;top:9px" width="30" height="32" viewBox="504 846 30 32"><path d="M519 875V852M509.300 862.300L519 852L528.700 862.300" fill="none" stroke="#a3a3a3" stroke-width="3.200"/></svg>
<span class="t" style="left:17.44px;top:15.00px;font-size:25.2px;color:#a3a3a3;transform:scaleX(1.1176);-webkit-text-stroke:0.6px #a3a3a3;">Count</span>
<span class="t" style="left:330.67px;top:15.00px;font-size:25.2px;color:#a3a3a3;transform:scaleX(1.1659);-webkit-text-stroke:0.6px #a3a3a3;">Start time</span>
<span class="t" style="left:775.05px;top:15.00px;font-size:25.2px;color:#a3a3a3;transform:scaleX(1.1352);-webkit-text-stroke:0.6px #a3a3a3;">End time</span>
<span class="t" style="left:1164.23px;top:15.00px;font-size:25.2px;color:#a3a3a3;transform:scaleX(1.1828);-webkit-text-stroke:0.6px #a3a3a3;">Duration</span>
<span class="t" style="left:1313.68px;top:15.00px;font-size:25.2px;color:#a3a3a3;transform:scaleX(1.1469);-webkit-text-stroke:0.6px #a3a3a3;">Generation depth</span>
<span class="t" style="left:1702.48px;top:15.00px;font-size:25.2px;color:#a3a3a3;transform:scaleX(1.0305);-webkit-text-stroke:0.6px #a3a3a3;">GC Reason</span></div>
<div id="details" class="clip" style="left:1934px;top:74px;width:540px;height:526px;border:4px solid #3c4045;border-right:none;border-bottom:none"><div style="left:26px;top:90px;width:484px;height:2px;background:#6a6a6a"></div>
<div style="left:26.5px;top:354.4px;width:485px;height:151.8px;border:2px solid #4a4a4a"></div>
<div style="left:26.5px;top:404.2px;width:485px;height:2px;background:#4a4a4a"></div>
<div style="left:26.5px;top:454px;width:485px;height:2px;background:#4a4a4a"></div>
<svg style="left:460px;top:367px" width="32" height="24" viewBox="0 0 32 24"><path d="M5.500 17.500L15.500 7.500L25.500 17.500" fill="none" stroke="#ddd" stroke-width="2"/></svg>
<svg style="left:460px;top:417px" width="32" height="24" viewBox="0 0 32 24"><path d="M5.500 17.500L15.500 7.500L25.500 17.500" fill="none" stroke="#ddd" stroke-width="2"/></svg>
<svg style="left:460px;top:466.5px" width="32" height="24" viewBox="0 0 32 24"><path d="M5.500 17.500L15.500 7.500L25.500 17.500" fill="none" stroke="#ddd" stroke-width="2"/></svg>
<div style="left:519px;top:173px;width:17px;height:331px;background:#343434"></div>
<span class="t" style="left:25.48px;top:35.00px;font-size:23.8px;color:#e4e4e4;transform:scaleX(1.0461);font-weight:700;">GC Event Details</span>
<span class="t" style="left:43.89px;top:129.00px;font-size:25.2px;color:#8a8a8a;transform:scaleX(1.0142);">Start time:</span>
<span class="t" style="left:167.81px;top:129.00px;font-size:25.2px;color:#e4e4e4;transform:scaleX(0.9705);">00:01:44.792</span>
<span class="t" style="left:42.87px;top:164.00px;font-size:25.2px;color:#8a8a8a;transform:scaleX(1.0214);">End time:</span>
<span class="t" style="left:158.52px;top:164.00px;font-size:25.2px;color:#e4e4e4;transform:scaleX(0.9658);">00:01:44.863</span>
<span class="t" style="left:42.82px;top:198.00px;font-size:25.2px;color:#8a8a8a;transform:scaleX(1.0545);">Duration:</span>
<span class="t" style="left:157.51px;top:198.00px;font-size:25.2px;color:#e4e4e4;transform:scaleX(0.9836);">71ms</span>
<span class="t" style="left:43.89px;top:233.00px;font-size:25.2px;color:#8a8a8a;transform:scaleX(1.0280);">Generation depth:</span>
<span class="t" style="left:258.07px;top:233.00px;font-size:25.2px;color:#e4e4e4;transform:scaleX(0.9526);">POH, LOH, Gen2, ...</span>
<span class="t" style="left:43.92px;top:268.00px;font-size:25.2px;color:#8a8a8a;transform:scaleX(0.9598);">GC reason:</span>
<span class="t" style="left:175.00px;top:268.00px;font-size:25.2px;color:#e4e4e4;">Out of space SOH</span>
<span class="t" style="left:44.88px;top:302.00px;font-size:25.2px;color:#8a8a8a;transform:scaleX(0.9633);">Type:</span>
<span class="t" style="left:110.17px;top:302.00px;font-size:25.2px;color:#e4e4e4;transform:scaleX(1.0214);">Non concurrent GC</span>
<span class="t" style="left:45.09px;top:369.00px;font-size:25.2px;color:#dcdcdc;transform:scaleX(1.0164);">Global Heap History</span>
<span class="t" style="left:45.11px;top:419.00px;font-size:25.2px;color:#dcdcdc;transform:scaleX(0.9785);">GC Per Heap History</span>
<span class="t" style="left:45.11px;top:468.00px;font-size:25.2px;color:#dcdcdc;transform:scaleX(0.9709);">GC Heap Gen</span></div>
<span class="t" style="left:2183.81px;top:34.00px;font-size:25.2px;color:#ccc;transform:scaleX(1.0224);">#22 event of 26</span>
</div>
</body></html>
